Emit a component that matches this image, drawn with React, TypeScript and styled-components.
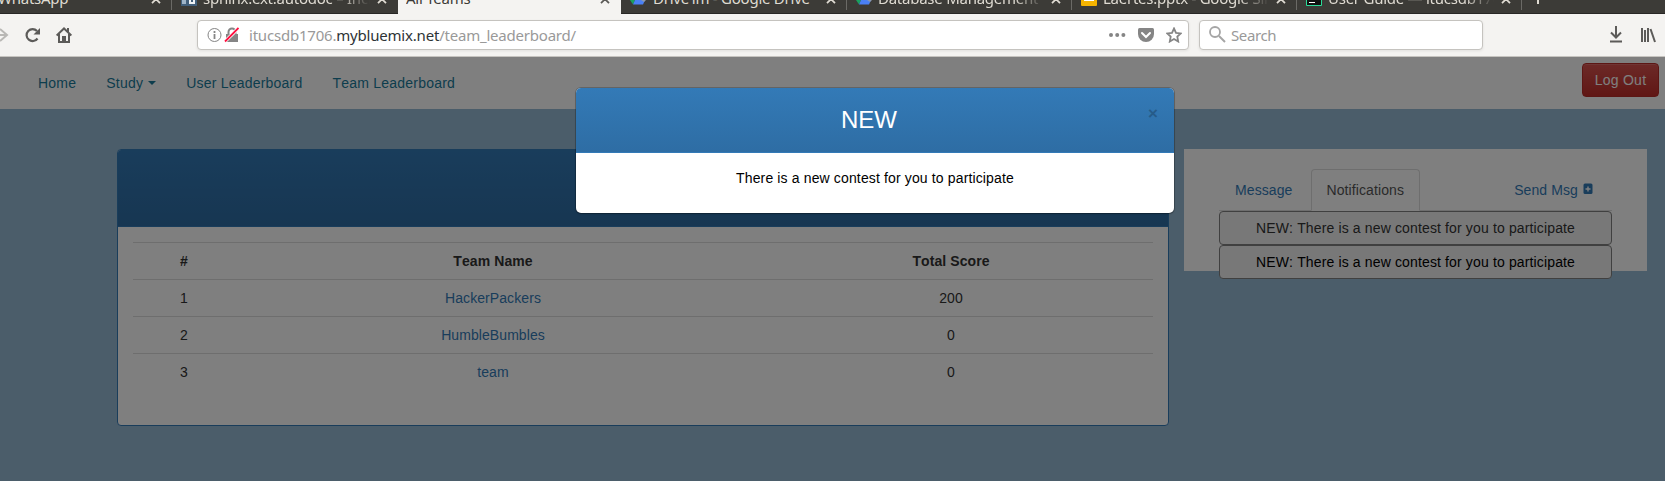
import React from "react";
import styled, { createGlobalStyle } from "styled-components";

const Global = createGlobalStyle`
  * { box-sizing: border-box; }
  body { margin: 0; background: #4b5d6a; overflow: hidden; font: 14px/20px "Liberation Sans", Arial, sans-serif; font-kerning: none; color: #333; }
  a { text-decoration: none; color: #337ab7; }
`;
const Browser = styled.div`
  height: 481px;
  display: flex;
  flex-direction: column;
  overflow: hidden;
`;
const TabStrip = styled.div`
  height: 14px;
  flex: none;
  display: flex;
  align-items: stretch;
  overflow: hidden;
  background: #3c3b37;
  font: 15px/20px "Noto Sans", sans-serif;
`;
const Tab = styled.div<{ $w: number; $active?: boolean; $line?: boolean }>`
  width: ${(p) => p.$w}px;
  flex: none;
  height: 14px;
  display: flex;
  align-items: flex-start;
  padding: 0 11px 0 9px;
  gap: 7px;
  color: ${(p) => (p.$active ? "#3c3b37" : "#dfdbd2")};
  background: ${(p) =>
    p.$active
      ? "#f4f3f1"
      : p.$line
      ? "linear-gradient(#6b6a66, #6b6a66) right 0 top 0 / 1px 10px no-repeat"
      : "none"};
  border-bottom: 1px solid ${(p) => (p.$active ? "#f4f3f1" : "#282725")};
`;
const TabTitle = styled.span<{ $fade?: boolean; $pull?: number }>`
  flex: 1;
  min-width: 0;
  white-space: nowrap;
  overflow: hidden;
  height: 20px;
  margin-top: -12px;
  margin-left: ${(p) => p.$pull ?? 0}px;
  letter-spacing: -0.25px;
  ${(p) => p.$fade && "mask-image: linear-gradient(to right, #000 82%, transparent);"}
`;
const Svg = styled.svg`
  display: block;
  flex: none;
`;
const Toolbar = styled.div`
  height: 43px;
  flex: none;
  display: flex;
  align-items: center;
  padding: 0 0 1px 0;
  background: #f4f3f1;
  border-bottom: 1px solid #c6c4c0;
  font: 15px/20px "Noto Sans", sans-serif;
`;
const NavIcons = styled.div`
  width: 197px;
  display: flex;
  align-items: center;
  gap: 14px;
`;
const Field = styled.div<{ $w: number }>`
  width: ${(p) => p.$w}px;
  height: 30px;
  display: flex;
  align-items: center;
  background: #fff;
  border: 1px solid #c5c3bf;
  border-radius: 4px;
  box-shadow: 0 1px 3px rgba(0, 0, 0, 0.08);
  padding: 0 6px 0 9px;
  margin-right: 10px;
  color: #999;
`;
const Address = styled.span`
  margin-left: 10px;
  flex: 1;
  letter-spacing: -0.21px;
  b { font-weight: 400; color: #2e3436; letter-spacing: -0.2px; }
`;
const FieldIcons = styled.div`
  display: flex;
  align-items: center;
  gap: 12px;
`;
const SearchHint = styled.span`
  margin-left: 5px;
  letter-spacing: -0.4px;
`;
const ToolIcons = styled.div`
  flex: 1;
  display: flex;
  justify-content: flex-end;
  align-items: center;
  gap: 17px;
  padding-right: 9px;
`;

const Page = styled.main`
  flex: 1;
  position: relative;
  background: #96bad4;
`;
const NavBar = styled.nav`
  height: 52px;
  background: #fff;
  display: flex;
  align-items: flex-start;
  padding: 6px 6px 0 23px;
`;
const NavLink = styled.a`
  && { color: #1a7b9b; }
  padding: 10px 15px;
  display: flex;
  align-items: center;
  letter-spacing: 0.22px;
`;
const Caret = styled.i`
  margin-left: 5px;
  border: 4px solid transparent;
  border-top-color: currentColor;
  border-bottom: 0;
`;
const LogOut = styled.button`
  margin-left: auto;
  width: 77px;
  height: 34px;
  padding: 0;
  border: 1px solid #b92c28;
  border-radius: 4px;
  background: linear-gradient(#d9534f, #c12e2a);
  color: #fff;
  font: 14px/20px "Liberation Sans", Arial, sans-serif;
  letter-spacing: 0.25px;
  box-shadow: inset 0 1px 0 rgba(255, 255, 255, 0.15);
`;
const Content = styled.div`
  display: flex;
  align-items: flex-start;
  gap: 15px;
  padding: 40px 0 0 117px;
`;
const Panel = styled.section`
  width: 1052px;
  height: 277px;
  background: #fff;
  border: 1px solid #337ab7;
  border-radius: 4px;
  overflow: hidden;
`;
const PanelHead = styled.div`
  height: 77px;
  background: linear-gradient(#337ab7, #2e6da4);
  border-bottom: 1px solid #337ab7;
`;
const Table = styled.table`
  width: 1020px;
  margin: 15px 15px 0;
  border-collapse: collapse;
  table-layout: fixed;
  text-align: center;
  td, th { height: 37px; padding: 8px; border-top: 1px solid #ddd; letter-spacing: 0.08px; }
  td:nth-child(2), th:nth-child(2) { padding-left: 10px; }
`;
const Side = styled.aside`
  width: 463px;
  height: 122px;
  background: #fff;
  padding: 20px 35px 0;
`;
const SideTabs = styled.div`
  display: flex;
  height: 42px;
  border-bottom: 1px solid #ddd;
`;
const SideTab = styled.a<{ $active?: boolean; $end?: boolean }>`
  height: 42px;
  padding: 10px 15px;
  margin-right: 2px;
  border: 1px solid transparent;
  border-radius: 4px 4px 0 0;
  letter-spacing: 0.1px;
  display: flex;
  gap: 5px;
  ${(p) => p.$active && "&& { color: #555; } background: #fff; border-color: #ddd #ddd #fff;"}
  ${(p) => p.$end && "margin-left: auto; padding-right: 16px;"}
`;
const Notice = styled.div<{ $fresh?: boolean }>`
  height: 34px;
  border: 1px solid #808080;
  border-radius: 4px;
  background: #f0f0f0;
  text-align: center;
  line-height: 32px;
  letter-spacing: 0.14px;
  color: ${(p) => (p.$fresh ? "#000" : "#333")};
`;
const Backdrop = styled.div`
  position: absolute;
  inset: 0;
  background: rgba(0, 0, 0, 0.5);
`;
const Modal = styled.div`
  position: absolute;
  top: 31px;
  left: 576px;
  width: 598px;
  height: 125px;
  border-radius: 5px;
  background: #fff;
  overflow: hidden;
  box-shadow: 0 0 0 1px rgba(0, 0, 0, 0.2), 0 1px 2px rgba(0, 0, 0, 0.2);
  color: #000;
  text-align: center;
`;
const ModalHead = styled.header`
  height: 65px;
  display: grid;
  grid-template-columns: 30px 1fr 42px;
  background: linear-gradient(#337ab7, #2e6da4);
  border-bottom: 1px solid #337ab7;
  color: #fff;
`;
const ModalTitle = styled.h3`
  margin: 0;
  grid-column: 2;
  font-weight: 400;
  font-size: 24px;
  line-height: 63px;
`;
const ModalClose = styled.button`
  height: 16px;
  margin-top: 18px;
  padding: 0;
  border: 0;
  background: none;
  color: #265b89;
  font: 700 17px/16px "Liberation Sans", sans-serif;
`;
const ModalText = styled.p`
  margin: 0;
  padding-top: 15px;
  letter-spacing: 0.14px;
`;

const CloseX = ({ color = "#dfdbd2" }: { color?: string }) => (
  <Svg width="10" height="4" viewBox="0 0 10 4">
    <path d="M1 -5 9 3.200M9 -5 1 3.200" stroke={color} strokeWidth="1.800" />
  </Svg>
);
const Drive = () => (
  <Svg width="16" height="5">
    <path d="M0 0h5L3 4.500z" fill="#19a15f" />
    <path d="M5 0h10l-2 4.500H3z" fill="#4a80f5" />
    <path d="M11 0h5l-2 2z" fill="#8a98b0" />
  </Svg>
);

const teams = [
  { rank: 1, name: "HackerPackers", score: 200 },
  { rank: 2, name: "HumbleBumbles", score: 0 },
  { rank: 3, name: "team", score: 0 },
];

export default function App() {
  return (
    <Browser>
      <Global />
      <TabStrip>
        <Tab $w={172} $line>
          <TabTitle $pull={-11}>WhatsApp</TabTitle><CloseX />
        </Tab>
        <Tab $w={226}>
          <Svg width="16" height="6"><path d="M0 0h16v6H0z" fill="#425f7b" /><path d="M1 0h4v4H1z" fill="#9fb4c8" /><path d="M8 0h6v4H8z" fill="#eef1f4" /><path d="M10 0h2v2h-2z" fill="#425f7b" /></Svg>
          <TabTitle $fade $pull={-1}>sphinx.ext.autodoc – Include</TabTitle><CloseX />
        </Tab>
        <Tab $w={223} $active>
          <TabTitle $pull={-1}>All Teams</TabTitle><CloseX color="#5c5b58" />
        </Tab>
        <Tab $w={226} $line><Drive /><TabTitle>Drive'ım - Google Drive</TabTitle><CloseX /></Tab>
        <Tab $w={225} $line><Drive /><TabTitle $fade $pull={-1}>Database Management - G</TabTitle><CloseX /></Tab>
        <Tab $w={225} $line>
          <Svg width="16" height="6"><rect y="-4" width="16" height="10" rx="1" fill="#f5b400" /><path d="M3 0h10v1H3z" fill="#fff" /></Svg>
          <TabTitle $fade $pull={-1}>Laertes.pptx - Google Slides</TabTitle><CloseX />
        </Tab>
        <Tab $w={225} $line>
          <Svg width="16" height="6"><path d="M.5-1v6.500h15V-1" fill="#111" stroke="#2bdc98" /><path d="M3 2.500h6" stroke="#fff" /></Svg>
          <TabTitle $fade $pull={-1}>User Guide — itucsdb1706</TabTitle><CloseX />
        </Tab>
        <Tab $w={143}><Svg width="16" height="4"><path d="M7 0v4" stroke="#dfdbd2" strokeWidth="2" /></Svg></Tab>
      </TabStrip>
      <Toolbar>
        <NavIcons>
          <Svg width="10" height="16" viewBox="0 0 10 16"><path d="M0 8h6M0 2l7 6-7 6" fill="none" stroke="#b9b8b5" strokeWidth="2" /></Svg>
          <Svg width="18" height="16" viewBox="0 0 18 16"><path d="M13.500 11.500A6 6 0 1 1 13 4" fill="none" stroke="#5c5b59" strokeWidth="2.200" /><path d="M16 1v6.500H9.500z" fill="#5c5b59" /></Svg>
          <Svg width="16" height="16" viewBox="0 0 16 16"><path d="M.6 8.500 8 1.500l7.400 7M3 7v8h10V7" fill="none" stroke="#5c5b59" strokeWidth="2" /><path d="M6 9h4v6H6zM11 1h2v4h-2z" fill="#5c5b59" /></Svg>
        </NavIcons>
        <Field $w={992}>
          <Svg width="32" height="16" viewBox="0 0 32 16">
            <circle cx="7.500" cy="8" r="6.500" fill="none" stroke="#858585" />
            <path d="M7.500 7v5M7.500 4v2" stroke="#858585" strokeWidth="1.800" />
            <path d="M19 7h12v8H19z" fill="#858585" /><path d="M21.500 7V5a3.500 3.500 0 0 1 7 0v2" fill="none" stroke="#858585" strokeWidth="2" />
            <path d="M18 14.500 31.500 1" stroke="#fff" strokeWidth="3.400" /><path d="M18 14.500 31.500 1" stroke="#ff1040" strokeWidth="1.800" />
          </Svg>
          <Address>itucsdb1706.<b>mybluemix.net</b>/team_leaderboard/</Address>
          <FieldIcons>
            <Svg width="17" height="16"><g fill="#858585"><circle cx="2" cy="8" r="2" /><circle cx="8.200" cy="8" r="2" /><circle cx="14.400" cy="8" r="2" /></g></Svg>
            <Svg width="16" height="16" viewBox="0 0 16 16"><path d="M1.500 1h13Q16 1 16 2.500V7A8 8 0 0 1 0 7V2.500Q0 1 1.500 1z" fill="#858585" /><path d="M4 6l4 4 4-4" fill="none" stroke="#fff" strokeWidth="2" strokeLinecap="round" /></Svg>
            <Svg width="16" height="16" viewBox="0 0 16 16"><path d="m8 1.500 2 4.300 4.700.6-3.400 3.200.9 4.900L8 12l-4.200 2.500.9-4.900L1.300 6.400 6 5.800z" fill="none" stroke="#858585" strokeWidth="1.800" /></Svg>
          </FieldIcons>
        </Field>
        <Field $w={284}>
          <Svg width="17" height="17" viewBox="0 0 17 17"><circle cx="6" cy="6" r="5" fill="none" stroke="#a5a5a5" strokeWidth="1.800" /><path d="m10 10 6 6" stroke="#a5a5a5" strokeWidth="2" /></Svg>
          <SearchHint>Search</SearchHint>
        </Field>
        <ToolIcons>
          <Svg width="14" height="17" viewBox="0 0 14 17"><path d="M7 0v11M2 6.500l5 5 5-5M1 15.500h12" fill="none" stroke="#5c5b59" strokeWidth="2" /></Svg>
          <Svg width="16" height="16" viewBox="0 0 16 16"><path d="M2 1v14M5 3v12M8 1v14" stroke="#5c5b59" strokeWidth="2" /><path d="m10.500 2 4.500 13" stroke="#5c5b59" strokeWidth="2" /></Svg>
        </ToolIcons>
      </Toolbar>
      <Page>
        <NavBar>
          <NavLink>Home</NavLink>
          <NavLink>Study<Caret /></NavLink>
          <NavLink>User Leaderboard</NavLink>
          <NavLink>Team Leaderboard</NavLink>
          <LogOut>Log Out</LogOut>
        </NavBar>
        <Content>
          <Panel>
            <PanelHead />
            <Table>
              <colgroup><col width="102" /><col width="514" /><col width="404" /></colgroup>
              <thead><tr><th>#</th><th>Team Name</th><th>Total Score</th></tr></thead>
              <tbody>
                {teams.map((t) => (
                  <tr key={t.rank}><td>{t.rank}</td><td><a>{t.name}</a></td><td>{t.score}</td></tr>
                ))}
              </tbody>
            </Table>
          </Panel>
          <Side>
            <SideTabs>
              <SideTab>Message</SideTab>
              <SideTab $active>Notifications</SideTab>
              <SideTab $end>Send Msg
                <Svg width="10" height="20"><rect x="0.500" y="3.500" width="9" height="10.500" rx="1.500" fill="#337ab7" /><path d="M2.500 9h5M5 6.500v5" stroke="#fff" strokeWidth="1.400" /></Svg>
              </SideTab>
            </SideTabs>
            <Notice>NEW: There is a new contest for you to participate</Notice>
            <Notice $fresh>NEW: There is a new contest for you to participate</Notice>
          </Side>
        </Content>
        <Backdrop />
        <Modal>
          <ModalHead>
            <ModalTitle>NEW</ModalTitle>
            <ModalClose>×</ModalClose>
          </ModalHead>
          <ModalText>There is a new contest for you to participate</ModalText>
        </Modal>
      </Page>
    </Browser>
  );
}
